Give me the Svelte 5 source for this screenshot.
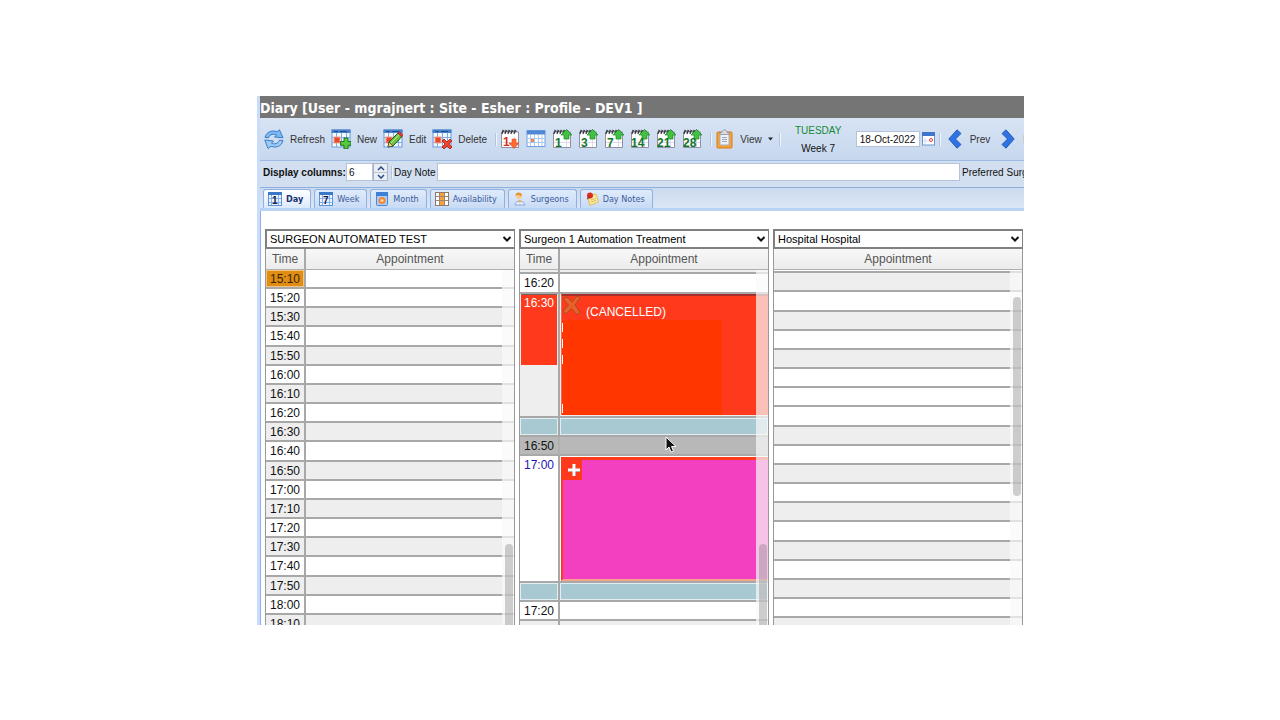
<script>
  const tabs = ['Day', 'Week', 'Month', 'Availability', 'Surgeons', 'Day Notes'];
  const jumps = ['1', '3', '7', '14', '21', '28'];
  const times = [];
  for (let m = 15 * 60 + 10; m <= 18 * 60 + 10; m += 10) {
    times.push(`${Math.floor(m / 60)}:${String(m % 60).padStart(2, '0')}`);
  }
  const hospitalRows = Array.from({ length: 19 }, (_, i) => i);
  let active = $state('Day');
  let columns = $state(6);
</script>

{#snippet grid()}
  <rect x="1" y="1" width="18" height="17" fill="#f4f9ff" stroke="#6a9ade" />
  <path d="M.5 .5h19v3.500H.5z" fill="#4a82cc" />
  <path d="M3 2.500h4M9 2.500h7" stroke="#1f4c94" />
  <path d="M5.500 4v14M10.500 4v14M15.500 4v14M1 8.500h18M1 13.500h18" stroke="#7dabe6" />
  <rect x="3" y="8" width="6" height="6" fill="#e8492c" stroke="#f7a08c" />
{/snippet}

{#snippet pad()}
  <path d="M1.500 3h17v15.500h-17z" fill="#fff" stroke="#928fa6" />
  <path d="M14.500 8v10M2 13.500h16" stroke="#dcdce8" />
  <path d="M2 5l1-3.500 1.500 1M5 5l1-3.500 1.500 1M8 5l1-3.500 1.500 1M11 5l1-3.500 1.500 1M14 5l1-3.500 1.500 1" fill="none" stroke="#38383c" stroke-width="1.200" />
{/snippet}

{#snippet chevron()}
  <svg class="chev" width="10" height="8" viewBox="0 0 10 8" aria-hidden="true"><path d="M1.500 2l3.500 3.500L8.500 2" fill="none" stroke="#111" stroke-width="2" /></svg>
{/snippet}

<main>
  <h1>Diary [User - mgrajnert : Site - Esher : Profile - DEV1 ]</h1>

  <div class="toolbar">
    <button class="tool">
      <svg width="20" height="20" viewBox="0 0 20 20" aria-hidden="true">
        <g stroke="#2f74c4" stroke-width=".9" stroke-linejoin="round">
          <path d="M1 8.500C2 3 8 .5 13 2.800L15.500.8 19 8.800 10.500 8l2-2.200C9.500 4.500 6 5 4.500 8.800z" fill="#7db8f2" />
          <path d="M19 11.500C18 17 12 19.500 7 17.200L4 19.500 .8 11l8.700 1-2 2.200c3 1.300 6.500.8 8-3z" fill="#9ccbf8" />
        </g>
      </svg>
      <span>Refresh</span>
    </button>
    <button class="tool">
      <svg width="20" height="20" viewBox="0 0 20 20" aria-hidden="true">
        {@render grid()}
        <path d="M13 9h4v3.500h3v3.800h-3V20h-4v-3.700H9.500v-3.800H13z" fill="#57c840" stroke="#15751a" />
      </svg>
      <span>New</span>
    </button>
    <button class="tool">
      <svg width="20" height="20" viewBox="0 0 20 20" aria-hidden="true">
        {@render grid()}
        <path d="M5 18l1-5L15 4l4 3.500L10 17z" fill="#6bc43f" stroke="#245c1f" />
        <path d="M15 4l1.500-1.500L20 6l-1.500 2z" fill="#e83b2c" stroke="#9c1d18" stroke-width=".6" />
        <path d="M5 18l1-5 4 4z" fill="#f7cf79" stroke="#333" stroke-width=".6" />
        <path d="M8 14l8-8" stroke="#b7ec8d" />
      </svg>
      <span>Edit</span>
    </button>
    <button class="tool">
      <svg width="20" height="20" viewBox="0 0 20 20" aria-hidden="true">
        {@render grid()}
        <path d="M10 12l2-2 3 3 3-3 2 2-3 3 3 3-2 2-3-3-3 3-2-2 3-3z" fill="#f04427" stroke="#a81c10" stroke-width=".8" />
      </svg>
      <span>Delete</span>
    </button>
    <i class="sep"></i>
    <div class="jumps">
      <button aria-label="Back one day">
        <svg width="20" height="20" viewBox="0 0 20 20" aria-hidden="true">
          {@render pad()}
          <text x="3" y="17" class="num red">1</text>
          <path d="M12 10h4v4h3l-5 5.500L9 14h3z" fill="#ff6a32" stroke="#e44713" stroke-width=".6" />
        </svg>
      </button>
      <button aria-label="Calendar">
        <svg width="20" height="20" viewBox="0 0 20 20" aria-hidden="true">
          <rect x="1" y="1.500" width="18" height="16" fill="#fff" stroke="#6f9ddd" />
          <path d="M1 1.500h18v4H1z" fill="#4f86d6" />
          <path d="M4.500 6v11M8.500 6v11M12.500 6v11M16 6v11M1 9.500h18M1 13.500h18" stroke="#abc8ef" />
          <rect x="5" y="10" width="3" height="3" fill="#f3864c" />
        </svg>
      </button>
      {#each jumps as n}
        <button aria-label="Forward {n} days">
          <svg width="20" height="20" viewBox="0 0 20 20" aria-hidden="true">
            {@render pad()}
            <path d="M12 10V6H9l5.500-5.500L20 6h-3v4z" fill="#43c143" stroke="#168a20" stroke-width=".7" />
            <text x={n.length > 1 ? 1 : 3} y="18" class="num">{n}</text>
          </svg>
        </button>
      {/each}
    </div>
    <i class="sep"></i>
    <button class="tool view">
      <svg width="18" height="20" viewBox="0 0 18 20" aria-hidden="true">
        <rect x="1" y="3" width="15" height="16" rx="1" fill="#f5a138" stroke="#d77c12" />
        <rect x="4" y="5" width="9" height="11" fill="#eef1f8" stroke="#a9afc0" />
        <path d="M6 8.500h5M6 10.500h5M6 12.500h5" stroke="#9da5bb" />
        <path d="M4 5.500V3.500h2C6 0 11 0 11 3.500h2v2z" fill="#d9dce4" stroke="#8b909c" stroke-width=".8" />
      </svg>
      <span>View</span>
      <svg width="5" height="4" viewBox="0 0 5 4" aria-hidden="true"><path d="M0 .5h5L2.500 3.500z" fill="#222" /></svg>
    </button>
    <i class="sep"></i>
    <div class="today"><b>TUESDAY</b><span>Week 7</span></div>
    <input class="date" aria-label="Date" value="18-Oct-2022" />
    <button class="pick" aria-label="Pick a date">
      <svg width="13" height="14" viewBox="0 0 13 14" aria-hidden="true">
        <rect x=".5" y=".5" width="12" height="12.500" fill="#fff" stroke="#6e94cc" />
        <path d="M0 0h13v4H0z" fill="#3f76ca" />
        <path d="M3 6v6M1 9h7" stroke="#cfdcf1" />
        <circle cx="9" cy="8" r="1.500" fill="#fff" stroke="#d34432" />
      </svg>
    </button>
    <i class="sep"></i>
    <button class="tool nav">
      <svg width="14" height="20" viewBox="0 0 14 20" aria-hidden="true"><path d="M9 .8L13 4.500 7.500 10 13 15.500 9 19.200.8 10z" fill="#2f72e4" stroke="#174bad" stroke-width=".8" /></svg>
      <span>Prev</span>
    </button>
    <button class="tool nav">
      <svg width="14" height="20" viewBox="0 0 14 20" aria-hidden="true"><path d="M5 .8L1 4.500 6.500 10 1 15.500 5 19.200 13.200 10z" fill="#2f72e4" stroke="#174bad" stroke-width=".8" /></svg>
      <span>Next</span>
    </button>
  </div>

  <div class="options">
    <label class="strong" for="cols">Display columns:</label>
    <input id="cols" type="number" bind:value={columns} />
    <div class="spin">
      <button aria-label="More columns" onclick={() => columns++}><svg width="8" height="5" viewBox="0 0 8 5" aria-hidden="true"><path d="M1 4l3-3 3 3" fill="none" stroke="#2d4a86" stroke-width="1.500" /></svg></button>
      <button aria-label="Fewer columns" onclick={() => columns--}><svg width="8" height="5" viewBox="0 0 8 5" aria-hidden="true"><path d="M1 1l3 3 3-3" fill="none" stroke="#2d4a86" stroke-width="1.500" /></svg></button>
    </div>
    <i class="sep"></i>
    <label for="note">Day Note</label>
    <input id="note" type="text" />
    <span class="preferred">Preferred Surgeon</span>
  </div>

  <nav>
    {#each tabs as t, i}
      <button class:active={active === t} onclick={() => (active = t)}>
        <svg width="14" height="14" viewBox="0 0 14 14" aria-hidden="true">
          {#if i < 2}
            <rect x=".5" y=".5" width="13" height="13" fill="#eaf3ff" stroke="#5f93d8" />
            <path d="M0 0h14v3H0z" fill="#3c78c8" />
            <path d="M1 6.500h12M1 10.500h12M3.500 3v10M10.500 3v10" stroke="#8ab2e6" />
            <text x="4" y="12" class="tabnum">{i ? 7 : 1}</text>
          {:else if i === 2}
            <rect x="1.500" y=".5" width="11" height="13" rx="1" fill="#a9cdf7" stroke="#4d86d2" />
            <path d="M1 0h12v4H1z" fill="#3f80d4" />
            <circle cx="7" cy="8.500" r="3.500" fill="#f58634" /><circle cx="7" cy="8.500" r="1.500" fill="#ffd9a1" />
          {:else if i === 3}
            <rect x=".5" y=".5" width="13" height="13" fill="#fff" stroke="#8c7a70" />
            <path d="M4 1h5v12H4z" fill="#f7a13d" />
            <path d="M4.500 1v12M9.500 1v12M1 4.500h12M1 8.500h12" stroke="#9b8576" />
          {:else if i === 4}
            <path d="M2 13c0-5 9-5 10 0z" fill="#e9efff" stroke="#89a3dc" />
            <path d="M5 8l2 4 1-4" fill="#f5b26c" /><circle cx="6" cy="4" r="3" fill="#f9c98d" />
            <path d="M2.500 4C2-.5 9-1 9 4 7 4 5 2 2.500 4z" fill="#e3942e" />
          {:else}
            <path d="M2 4l9-2 2.500 8L5 13.500z" fill="#fbe79a" stroke="#dab353" stroke-width=".8" />
            <path d="M5.500 8l5-1.500M6 10l5-1.500" stroke="#d9bd70" />
            <circle cx="5" cy="3.500" r="3" fill="#d92d20" /><path d="M2 7l3-2" stroke="#702018" />
          {/if}
        </svg>
        <span>{t}</span>
      </button>
    {/each}
  </nav>

  <section class="board">
    <article>
      <div class="picker">
        <select aria-label="First diary"><option>SURGEON AUTOMATED TEST</option></select>
        {@render chevron()}
      </div>
      <div class="sheet">
        <table>
          <thead><tr><th class="time">Time</th><th>Appointment</th></tr></thead>
          <tbody>
            {#each times as t, i}
              <tr class:alt={i > 0 && i % 2 === 0} class:long={i % 6 === 3}>
                <td class="time" class:now={i === 0}>{t}</td><td></td>
              </tr>
            {/each}
          </tbody>
        </table>
        <div class="track"><div class="thumb low"></div></div>
      </div>
    </article>

    <article>
      <div class="picker">
        <select aria-label="Second diary"><option>Surgeon 1 Automation Treatment</option></select>
        {@render chevron()}
      </div>
      <div class="sheet">
        <table>
          <thead><tr><th class="time">Time</th><th>Appointment</th></tr></thead>
          <tbody>
            <tr class="alt sliver"><td class="time"></td><td></td></tr>
            <tr class="long"><td class="time">16:20</td><td></td></tr>
            <tr class="alt first">
              <td class="time"><div class="mark">16:30</div></td>
              <td>
                <div class="cancelled">
                  <svg width="20" height="20" viewBox="0 0 20 20" aria-hidden="true"><path d="M1 3l4-2 5 5 5-6 3 2-5 7 5 7-3 3-5.500-6.500L4 18l-3-3 5.500-6z" fill="#e8602a" stroke="#a84a25" /></svg>
                  <span>(CANCELLED)</span>
                  <div class="detail"></div>
                  <div class="ticks"><i></i><i></i><i></i><i class="last"></i></div>
                </div>
              </td>
            </tr>
            <tr class="gap"><td class="time"></td><td></td></tr>
            <tr class="hover"><td class="time">16:50</td><td></td></tr>
            <tr class="second">
              <td class="time blue">17:00</td>
              <td>
                <div class="booked">
                  <div class="plus"><svg width="14" height="14" viewBox="0 0 14 14" aria-hidden="true"><path d="M6 2h3v4h4v3H9v4H6V9H2V6h4z" fill="#7c4a3a" /><path d="M5.500 1h3v4.500H13v3H8.500V13h-3V8.500H1v-3h4.500z" fill="#fff" /></svg></div>
                </div>
              </td>
            </tr>
            <tr class="gap"><td class="time"></td><td></td></tr>
            <tr><td class="time">17:20</td><td></td></tr>
            <tr class="alt"><td class="time"></td><td></td></tr>
          </tbody>
        </table>
        <div class="track"><div class="thumb low"></div></div>
        <svg class="cursor" width="12" height="18" viewBox="0 0 12 18" aria-hidden="true"><path d="M1 1v13l3-3 2 5 2.500-1-2-4.500H11z" fill="#111" stroke="#fff" /></svg>
      </div>
    </article>

    <article>
      <div class="picker">
        <select aria-label="Third diary"><option>Hospital Hospital</option></select>
        {@render chevron()}
      </div>
      <div class="sheet">
        <table>
          <thead><tr><th>Appointment</th></tr></thead>
          <tbody>
            <tr class="tiny"><td></td></tr>
            {#each hospitalRows as i}
              <tr class:alt={i % 2 === 0 && i !== 6} class:long={i % 6 === 1}><td></td></tr>
            {/each}
          </tbody>
        </table>
        <div class="track"><div class="thumb high"></div></div>
      </div>
    </article>
  </section>
</main>

<style>
  :global(body) { background: #fff; }
  :global(#app) {
    box-sizing: border-box;
    height: 100vh;
    padding: 96px 20% 95px;
    display: flex;
  }
  * { box-sizing: border-box; }
  main {
    flex: 1;
    min-width: 0;
    margin-left: 1px;
    border-left: 3px solid #cbdcfa;
    display: flex;
    flex-direction: column;
    overflow: hidden;
    font: 10px "Liberation Sans", Arial, sans-serif;
    color: #222;
  }
  button, input, select { font: inherit; color: inherit; margin: 0; }
  button { border: 0; padding: 0; background: none; display: flex; align-items: center; }
  svg { display: block; flex: none; }
  h1 {
    margin: 0;
    flex: none;
    height: 22px;
    background: #757575;
    color: #fff;
    font: bold 14px/24px "DejaVu Sans Condensed", "DejaVu Sans", Tahoma, sans-serif;
    white-space: nowrap;
  }
  .toolbar, .options {
    flex: none;
    display: flex;
    align-items: center;
    white-space: nowrap;
    overflow: hidden;
  }
  .toolbar {
    height: 43px;
    padding-left: 4px;
    background: linear-gradient(#d8e4f4, #c6d7ee);
    border-bottom: 1px solid #9dbbe2;
  }
  .tool { gap: 6px; margin-right: 6px; color: #333; flex: none; }
  .sep { flex: none; width: 2px; height: 13px; border-left: 1px solid #b3c6e0; border-right: 1px solid #eef4fc; }
  .toolbar .sep { margin-left: 2px; }
  .jumps { display: flex; gap: 6px; margin: 0 6px 0 3px; flex: none; }
  .num { font: bold 12px "Liberation Sans", Arial, sans-serif; fill: #12752a; }
  .num.red { fill: #d93116; }
  .view { margin: 0 4px; }
  .today { width: 75px; flex: none; display: flex; flex-direction: column; align-items: center; gap: 7px; line-height: 11px; color: #111; }
  .today b { font-weight: normal; color: #138a36; }
  .date { width: 64px; height: 16px; padding: 0 3px; border: 1px solid #b5c3d8; background: #fff; flex: none; color: #111; }
  .pick { margin: 0 2px; flex: none; }
  .nav { gap: 8px; margin: 0 4px 0 7px; }
  .options {
    height: 27px;
    padding: 0 0 4px 3px;
    background: #d1dff0;
    border-bottom: 1px solid #8fb0de;
    color: #111;
  }
  .strong { font-weight: bold; width: 83px; flex: none; }
  .options input { height: 18px; border: 1px solid #b5c3d8; background: #fff; padding: 0 2px; min-width: 0; }
  #cols { width: 27px; flex: none; appearance: textfield; }
  #cols::-webkit-inner-spin-button { display: none; }
  .spin { flex: none; width: 15px; height: 18px; display: grid; grid-template-rows: 1fr 1fr; border: 1px solid #a9b4c6; background: #e9edf4; margin-right: 3px; }
  .spin button { justify-content: center; }
  .spin button + button { border-top: 1px solid #bac4d3; }
  .options label[for="note"] { margin: 0 1px; flex: none; }
  #note { flex: 1; }
  .preferred { width: 62px; margin-left: 2px; overflow: hidden; flex: none; }
  nav {
    flex: none;
    height: 23px;
    display: flex;
    align-items: flex-end;
    gap: 3px;
    padding: 0 3px;
    background: linear-gradient(#cbdaee, #dbe6f5);
    border-bottom: 3px solid #b8d2f6;
    font: 9px "DejaVu Sans Condensed", "DejaVu Sans", Tahoma, sans-serif;
    color: #3c5a98;
  }
  nav button {
    height: 19px;
    gap: 4px;
    padding: 0 7px 0 4px;
    border: 1px solid #8fb2e3;
    border-bottom: 0;
    border-radius: 3px 3px 0 0;
    background: linear-gradient(#dfebfb, #c8dbf5);
  }
  nav button.active { background: linear-gradient(#fff, #dbe9fc); font-weight: bold; color: #17326e; }
  .tabnum { font: bold 10px "Liberation Sans", Arial, sans-serif; fill: #14213f; }
  .board {
    flex: 1;
    min-height: 0;
    display: grid;
    grid-template-columns: repeat(3, minmax(0, 1fr));
    gap: 4px;
    padding: 18px 1px 0 4px;
    border-left: 1px solid #8fb2ea;
    background: #fff;
  }
  article { min-height: 0; display: flex; flex-direction: column; font-size: 12px; }
  .picker { position: relative; flex: none; }
  select {
    display: block;
    width: 100%;
    height: 20px;
    padding: 0 3px;
    appearance: none;
    border: 2px solid #808080;
    border-right-width: 1px;
    border-radius: 0;
    background: #fff;
    font-size: 11px;
    color: #000;
  }
  .chev { position: absolute; right: 3px; top: 6px; pointer-events: none; }
  .sheet { position: relative; flex: 1; min-height: 0; overflow: hidden; border: 1px solid #999; border-width: 0 1px; }
  table { width: 100%; table-layout: fixed; border-collapse: separate; border-spacing: 0; }
  th {
    height: 21px;
    padding: 0;
    font-weight: normal;
    color: #555;
    background: linear-gradient(#f8f8f8, #ececec);
    border-bottom: 1px solid #b0b0b0;
  }
  .time { width: 40px; border-right: 2px solid #a8a8a8; text-align: center; color: #111; }
  th.time { color: #555; }
  td { height: 19px; padding: 0; line-height: 16px; border-bottom: 2px solid #a8a8a8; background: #fff; }
  .long td { height: 20px; }
  .alt td { background: #eee; }
  td.now { background: #df8d14; box-shadow: inset 0 0 0 1px #f3c480; color: #3a2200; }
  .sliver td { height: 4px; line-height: 0; }
  .tiny td { height: 3px; line-height: 0; border-bottom-width: 2px; }
  .first td, .second td { vertical-align: top; }
  .first td { height: 124px; }
  .second td { height: 127px; }
  .second .time { padding-top: 1px; }
  td.blue { color: #2217b8; }
  .mark { height: 71px; margin: 0 1px; border-top: 1px solid #7a5f5c; background: #ff3a1c; color: #fff; }
  .gap td { background: #a9c9d2; box-shadow: inset 0 0 0 1px #e2eef1; }
  .hover td { background: #b8b8b8; }
  .hover .time { border-right-color: #b0b0b0; }
  .cancelled {
    height: 121px;
    margin-left: 1px;
    position: relative;
    display: grid;
    grid-template-columns: 20px auto;
    grid-template-rows: 24px 1fr;
    column-gap: 4px;
    border-top: 2px solid #a3302a;
    border-left: 1px solid #f06a50;
    background: #ff3a1c;
    color: #fff;
  }
  .cancelled span { padding-top: 8px; }
  .detail { grid-column: 1 / 3; margin: 0 46px 0 0; background: #ff3600; }
  .ticks { position: absolute; left: 0; top: 27px; display: grid; gap: 7px; }
  .ticks i { width: 1px; height: 9px; background: #fff; }
  .ticks .last { margin-top: 33px; }
  .booked { height: 124px; margin: 1px 0 0 1px; border: solid #ff3a1c; border-width: 3px 0 0 2px; border-bottom: 2px solid #f5a38c; background: #f240c0; }
  .plus { width: 19px; height: 20px; padding: 3px 4px; background: #ff3a1c; }
  .track { position: absolute; top: 21px; right: 0; bottom: 0; width: 12px; padding: 0 1px 0 3px; background: rgba(250, 250, 250, .7); }
  .thumb { background: rgba(120, 120, 120, .35); border-radius: 4px; }
  .low { margin-top: 274px; height: 200px; }
  .high { margin-top: 27px; height: 199px; }
  .cursor { position: absolute; left: 60%; top: 187px; margin-left: -4px; }
</style>
